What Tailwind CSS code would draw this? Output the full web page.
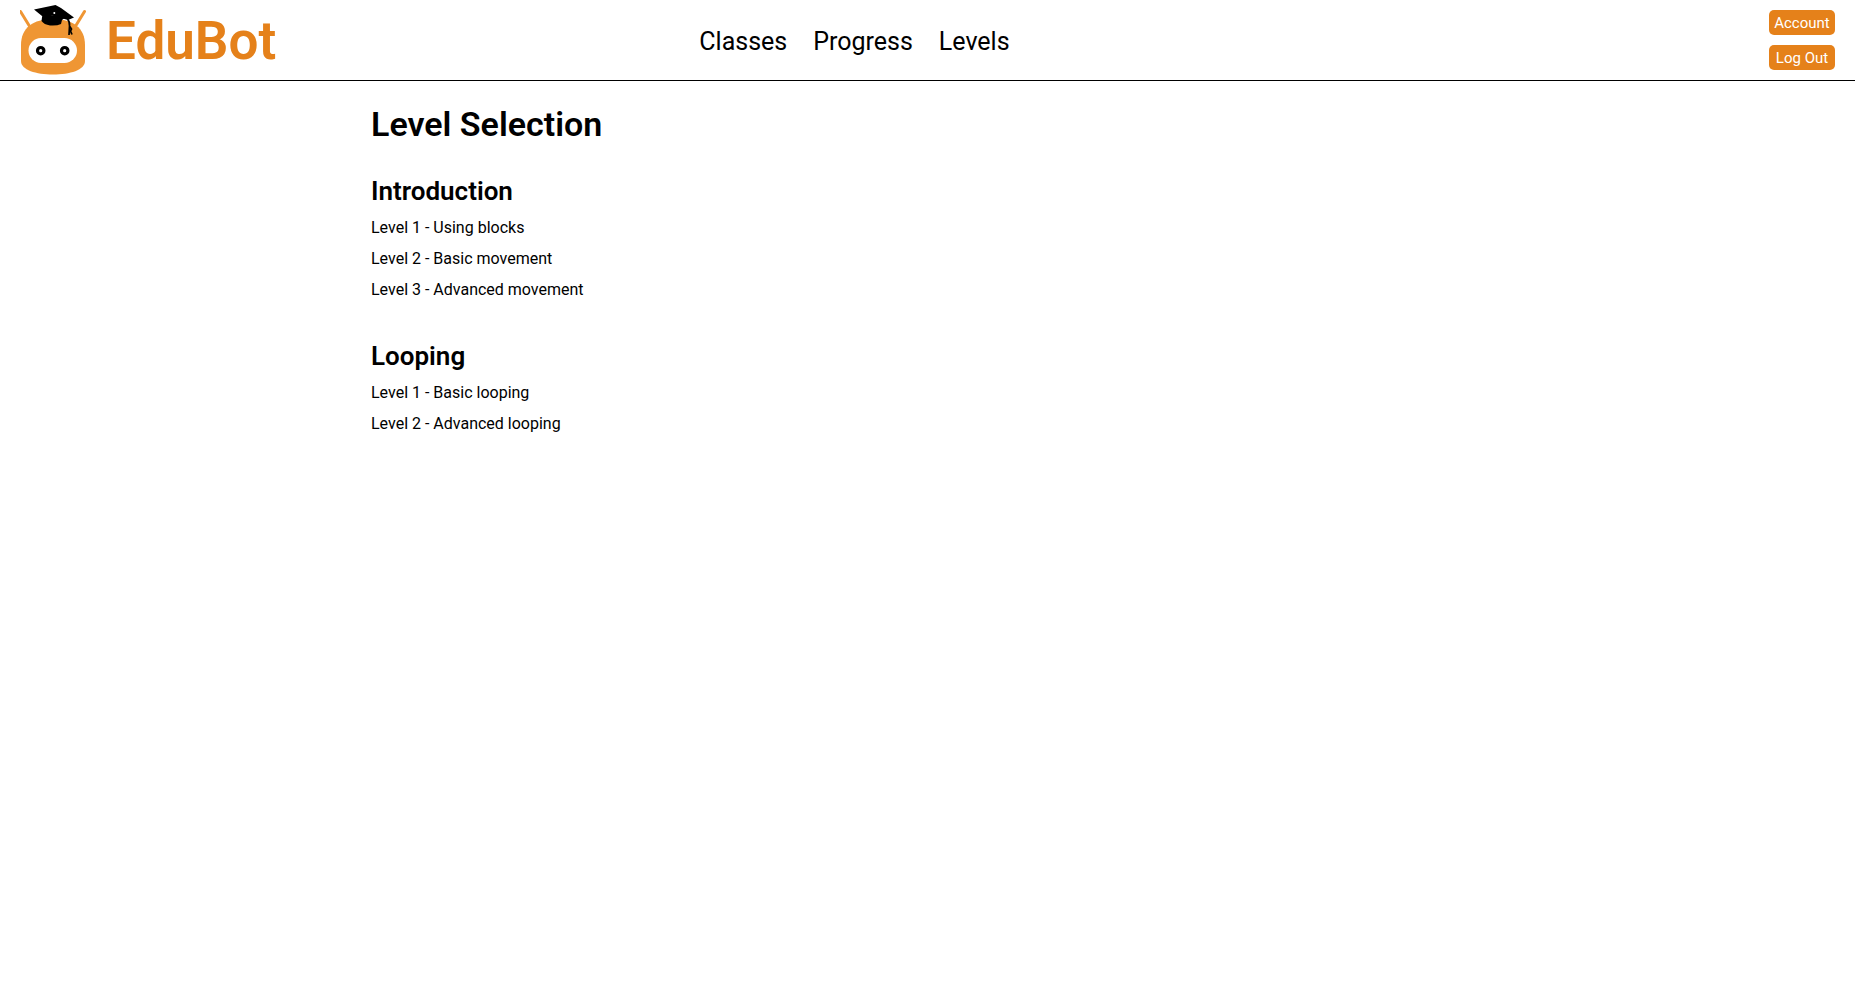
<!DOCTYPE html>
<html lang="en">
<head>
<meta charset="utf-8">
<title>EduBot</title>
<script src="https://cdn.jsdelivr.net/npm/@tailwindcss/browser@4"></script>
</head>
<body class="bg-white font-[Roboto,sans-serif] text-black">
<header class="grid h-[81px] grid-cols-[9fr_auto_11fr] items-center border-b border-black px-5">
  <a href="#" class="flex h-20 items-center gap-5" aria-label="EduBot home">
    <svg class="h-20 w-[66px]" viewBox="20 0 66 80" aria-hidden="true">
      <path d="M20.500 11.500L30 27M84.500 11.500L75 27" stroke="#ef9634" stroke-width="3" stroke-linecap="round"/>
      <path d="M21 45C21 28 33 19 53 19S85 28 85 45V61C85 70 70 74.500 53 74.500S21 70 21 61Z" fill="#ef9634"/>
      <rect x="28.500" y="38" width="48.500" height="25" rx="12.500" fill="#fff"/>
      <g fill="#fff" stroke="#000" stroke-width="3.200"><circle cx="40.700" cy="50.700" r="3.200"/><circle cx="64.700" cy="50.700" r="3.200"/></g>
      <path d="M42.500 14L41.500 21Q44 24.500 50 25.500Q57 26 61 24L62 20L66 17Z"/>
      <path d="M34 9.500L55.500 5L61 8L74 17.500L68 20L52 15.500L42 16Z"/>
      <path d="M67.500 19Q70 22 69.500 26L69 35M69.500 26L71.500 29L70.500 31L72 34.500" stroke="#000" stroke-width="1.700" fill="none"/>
      <circle cx="54.300" cy="13" r="1" fill="#fff"/>
    </svg>
    <span class="pt-0.5 text-[53px] leading-none font-semibold text-[#e5811a]">EduBot</span>
  </a>
  <nav class="flex gap-[26px] pt-1 pl-1 text-[25px] leading-8">
    <a href="#">Classes</a>
    <a href="#">Progress</a>
    <a href="#">Levels</a>
  </nav>
  <div class="flex flex-col items-end gap-2.5">
    <button type="button" class="h-[25px] w-[66px] rounded-[5px] bg-[#e5811a] pt-px text-[15px] leading-none text-white">Account</button>
    <button type="button" class="h-[25px] w-[66px] rounded-[5px] bg-[#e5811a] pt-px text-[15px] leading-none text-white">Log Out</button>
  </div>
</header>
<main class="mx-[20%] pt-6">
  <h1 class="text-[34px] leading-[38px] font-semibold">Level Selection</h1>
  <section class="pt-[33px]">
    <h2 class="text-[26px] leading-[30px] font-semibold">Introduction</h2>
    <ul class="flex flex-col gap-3 pt-3 text-base leading-[19px]">
      <li><a href="#">Level 1 - Using blocks</a></li>
      <li><a href="#">Level 2 - Basic movement</a></li>
      <li><a href="#">Level 3 - Advanced movement</a></li>
    </ul>
  </section>
  <section class="pt-[42px]">
    <h2 class="text-[26px] leading-[30px] font-semibold">Looping</h2>
    <ul class="flex flex-col gap-3 pt-3 text-base leading-[19px]">
      <li><a href="#">Level 1 - Basic looping</a></li>
      <li><a href="#">Level 2 - Advanced looping</a></li>
    </ul>
  </section>
</main>
</body>
</html>
